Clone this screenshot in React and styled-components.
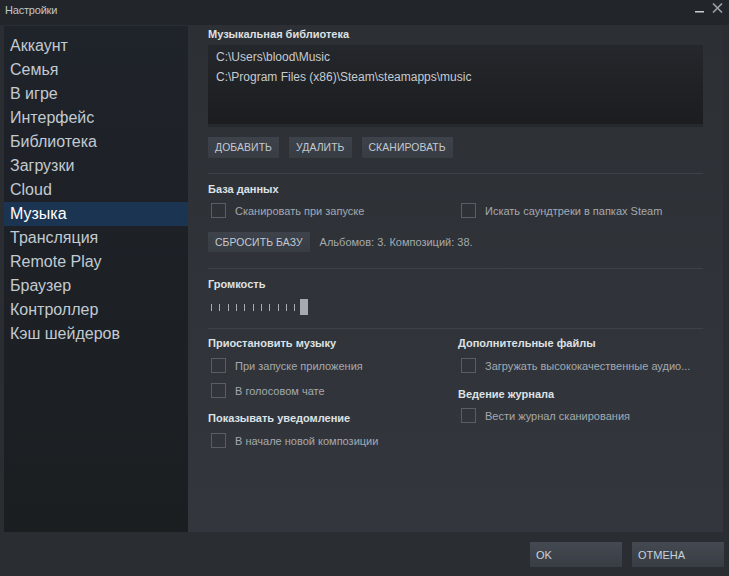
import React from "react";
import styled, { createGlobalStyle } from "styled-components";

const Global = createGlobalStyle`
  html, body { margin: 0; padding: 0; }
  body {
    background: #2a2d32;
    font-family: "Liberation Sans", Arial, sans-serif;
    width: 729px;
    height: 576px;
    overflow: hidden;
  }
`;

const Window = styled.div`
  width: 729px;
  height: 576px;
  display: flex;
  flex-direction: column;
  background: #2a2d32;
`;

const TitleBar = styled.div`
  height: 25px;
  flex: 0 0 25px;
  background: #22262b;
  display: flex;
  align-items: flex-start;
  justify-content: space-between;
  padding: 0 6px 0 5px;
  box-sizing: border-box;
`;

const Title = styled.div`
  font-size: 11px;
  line-height: 11px;
  padding-top: 5px;
  color: #c3c7cc;
  letter-spacing: -0.2px;
`;

const WinControls = styled.div`
  display: flex;
  align-items: flex-start;
  gap: 7px;
  padding-top: 3px;
`;

const Main = styled.div`
  flex: 0 0 507px;
  display: flex;
  padding: 0 6px 0 4px;
`;

const Sidebar = styled.nav`
  width: 184px;
  flex: 0 0 184px;
  background: linear-gradient(#1f232a, #1b1e21);
  border-top: 1px solid #2a2e34;
  box-sizing: border-box;
  padding-top: 8px;
  display: flex;
  flex-direction: column;
`;

const NavItem = styled.div`
  height: 24px;
  line-height: 24px;
  padding-left: 6px;
  font-size: 16px;
  color: ${(p) => (p.$active ? "#ffffff" : "#c2cad2")};
  background: ${(p) => (p.$active ? "#1b3452" : "transparent")};
`;

const Content = styled.section`
  flex: 1;
  background: linear-gradient(#2c2f34, #33373d);
  padding: 2px 20px 0 20px;
  box-sizing: border-box;
  display: flex;
  flex-direction: column;
`;

const Heading = styled.div`
  font-size: 11px;
  line-height: 14px;
  font-weight: bold;
  color: #dde1e5;
  margin-top: ${(p) => p.$mt || 0}px;
`;

const LibBox = styled.div`
  margin-top: 4px;
  height: 82px;
  box-sizing: border-box;
  background: linear-gradient(#24272b, #1b1d20);
  border-bottom: 3px solid #25282c;
  padding: 2px 8px;
`;

const Path = styled.div`
  font-size: 12px;
  line-height: 20px;
  color: #c6cbd0;
`;

const ButtonRow = styled.div`
  display: flex;
  gap: 10px;
  margin-top: ${(p) => p.$mt || 0}px;
  align-items: center;
`;

const Btn = styled.button`
  height: ${(p) => p.$h || 21}px;
  padding: 0 7px;
  border: none;
  background: linear-gradient(#3e424a, #383c43);
  color: #c3cad2;
  font-family: "Liberation Sans", Arial, sans-serif;
  font-size: 10.4px;
  letter-spacing: 0.1px;
  text-transform: uppercase;
  cursor: pointer;
`;

const Sep = styled.div`
  height: 1px;
  background: #3e4248;
  margin-top: ${(p) => p.$mt || 0}px;
`;

const Row = styled.div`
  display: flex;
  margin-top: ${(p) => p.$mt || 0}px;
`;

const CheckRow = styled.label`
  display: flex;
  align-items: center;
  gap: 9px;
  padding-left: 3px;
  box-sizing: border-box;
  height: 15px;
  width: ${(p) => p.$w || "auto"};
  margin-top: ${(p) => p.$mt || 0}px;
`;

const Box = styled.span`
  width: 15px;
  height: 15px;
  box-sizing: border-box;
  border: 1px solid #5a5e64;
  flex: 0 0 15px;
`;

const Label = styled.span`
  font-size: 11px;
  color: #a4a9af;
  white-space: nowrap;
`;

const Info = styled.span`
  font-size: 11px;
  color: #a4a9af;
`;

const Slider = styled.div`
  display: flex;
  align-items: center;
  margin-top: 8px;
  padding-left: 3px;
  height: 16px;
`;

const Tick = styled.span`
  width: 1px;
  height: 7px;
  background: #a8acb1;
  margin-right: 7.33px;
`;

const Thumb = styled.span`
  width: 8px;
  height: 16px;
  background: #a6aaaf;
  margin-left: -3px;
`;

const Columns = styled.div`
  display: grid;
  grid-template-columns: 250px 1fr;
  margin-top: 7px;
`;

const Col = styled.div`
  display: flex;
  flex-direction: column;
`;

const Footer = styled.div`
  flex: 1;
  display: flex;
  justify-content: flex-end;
  align-items: flex-start;
  gap: 10px;
  padding: 10px 5px 0 0;
`;

const FootBtn = styled.button`
  width: 92px;
  height: 25px;
  border: none;
  background: linear-gradient(#454a52, #383c43);
  color: #c6d2de;
  font-family: "Liberation Sans", Arial, sans-serif;
  font-size: 11px;
  text-align: left;
  padding: 0 6px;
  cursor: pointer;
`;

const Check = ({ children, mt, w }) => (
  <CheckRow $mt={mt} $w={w}>
    <Box />
    <Label>{children}</Label>
  </CheckRow>
);

const navItems = [
  "Аккаунт",
  "Семья",
  "В игре",
  "Интерфейс",
  "Библиотека",
  "Загрузки",
  "Cloud",
  "Музыка",
  "Трансляция",
  "Remote Play",
  "Браузер",
  "Контроллер",
  "Кэш шейдеров",
];

export default function App() {
  return (
    <Window>
      <Global />
      <TitleBar>
        <Title>Настройки</Title>
        <WinControls>
          <svg width="10" height="10" viewBox="0 0 10 10">
            <rect x="0" y="8" width="9" height="1.5" fill="#c9cdd1" />
          </svg>
          <svg width="11" height="10" viewBox="0 0 11 10">
            <path d="M1 0.5 L10 9.5 M10 0.5 L1 9.5" stroke="#9ca1a7" strokeWidth="1.6" />
          </svg>
        </WinControls>
      </TitleBar>
      <Main>
        <Sidebar>
          {navItems.map((n) => (
            <NavItem key={n} $active={n === "Музыка"}>
              {n}
            </NavItem>
          ))}
        </Sidebar>
        <Content>
          <Heading>Музыкальная библиотека</Heading>
          <LibBox>
            <Path>C:\Users\blood\Music</Path>
            <Path>C:\Program Files (x86)\Steam\steamapps\music</Path>
          </LibBox>
          <ButtonRow $mt={10}>
            <Btn>Добавить</Btn>
            <Btn>Удалить</Btn>
            <Btn>Сканировать</Btn>
          </ButtonRow>
          <Sep $mt={15} />
          <Heading $mt={8}>База данных</Heading>
          <Row $mt={7}>
            <Check w="250px">Сканировать при запуске</Check>
            <Check>Искать саундтреки в папках Steam</Check>
          </Row>
          <ButtonRow $mt={14}>
            <Btn $h={20}>Сбросить базу</Btn>
            <Info>Альбомов: 3. Композиций: 38.</Info>
          </ButtonRow>
          <Sep $mt={16} />
          <Heading $mt={8}>Громкость</Heading>
          <Slider>
            {Array.from({ length: 11 }).map((_, i) => (
              <Tick key={i} />
            ))}
            <Thumb />
          </Slider>
          <Sep $mt={13} />
          <Columns>
            <Col>
              <Heading>Приостановить музыку</Heading>
              <Check mt={8}>При запуске приложения</Check>
              <Check mt={10}>В голосовом чате</Check>
              <Heading $mt={13}>Показывать уведомление</Heading>
              <Check mt={8}>В начале новой композиции</Check>
            </Col>
            <Col>
              <Heading>Дополнительные файлы</Heading>
              <Check mt={8}>Загружать высококачественные аудио...</Check>
              <Heading $mt={14}>Ведение журнала</Heading>
              <Check mt={7}>Вести журнал сканирования</Check>
            </Col>
          </Columns>
        </Content>
      </Main>
      <Footer>
        <FootBtn>OK</FootBtn>
        <FootBtn>ОТМЕНА</FootBtn>
      </Footer>
    </Window>
  );
}
